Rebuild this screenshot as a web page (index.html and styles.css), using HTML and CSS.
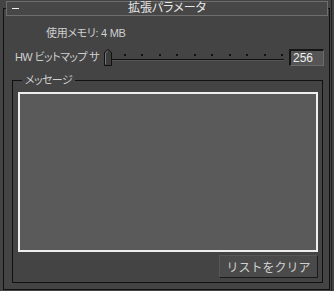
FILE: index.html
```html
<!DOCTYPE html>
<html lang="ja">
<head>
    <meta charset="UTF-8">
    <title>拡張パラメータ</title>
    <link rel="stylesheet" href="styles.css">
</head>
<body>
    <div class="page">
        <div class="rollout">
            <div class="rollout-title">
                <span class="collapse"></span>
                <span class="title-text">拡張パラメータ</span>
            </div>

            <div class="memory">使用メモリ: 4 MB</div>

            <div class="bitmap-row">
                <span class="bitmap-label">HW ビットマップ サ</span>
                <svg class="slider" width="182" height="17" viewBox="0 0 182 17">
                    <!-- tick dots -->
                    <g fill="#111">
                        <rect x="3" y="5" width="2" height="2"/>
                        <rect x="20" y="5" width="2" height="2"/>
                        <rect x="37" y="5" width="2" height="2"/>
                        <rect x="55" y="5" width="2" height="2"/>
                        <rect x="72" y="5" width="2" height="2"/>
                        <rect x="90" y="5" width="2" height="2"/>
                        <rect x="107" y="5" width="2" height="2"/>
                        <rect x="125" y="5" width="2" height="2"/>
                        <rect x="142" y="5" width="2" height="2"/>
                        <rect x="160" y="5" width="2" height="2"/>
                        <rect x="177" y="5" width="2" height="2"/>
                    </g>
                    <!-- track -->
                    <rect x="4" y="10" width="176" height="1" fill="#111"/>
                    <rect x="4" y="11" width="176" height="1" fill="#555"/>
                    <!-- thumb -->
                    <polygon points="0.5,3.5 4,0.5 7.5,3.5 7.5,16.5 0.5,16.5" fill="#3c3c3c" stroke="#111"/>
                    <polyline points="1.5,15.5 1.5,4 4,1.8" fill="none" stroke="#777"/>
                </svg>
                <span class="spinner">256</span>
            </div>

            <fieldset class="messages">
                <legend>メッセージ</legend>
                <div class="message-list"></div>
                <div class="actions">
                    <button class="button">リストをクリア</button>
                </div>
            </fieldset>
        </div>
    </div>
</body>
</html>
```

FILE: styles.css
```css
body {
    margin: 0;
    padding: 0;
    background-color: #444444;
    font-family: "Liberation Sans", "Noto Sans CJK JP", sans-serif;
    font-size: 11px;
    font-feature-settings: "palt";
    color: #cfcfcf;
}
.page {
    width: 332px;
    height: 291px;
    border-right: 1px solid #222;
    padding-top: 8px;
    box-sizing: border-box;
}
.rollout {
    margin-left: 3px;
    width: 327px;
    height: 282px;
    box-sizing: border-box;
    border: 1px solid #111;
}
.rollout-title {
    display: flex;
    align-items: center;
    margin: -8px 0 0 2px;
    width: 322px;
    height: 15px;
    box-sizing: border-box;
    border: 1px solid #6e6e6e;
    background-color: #474747;
    color: #e6e6e6;
}
.collapse {
    width: 7px;
    height: 1px;
    margin-left: 5px;
    background-color: #eeeeee;
}
.title-text {
    flex: 1;
    text-align: center;
    margin-right: 12px;
    line-height: 13px;
    font-size: 12px;
}
.memory {
    margin-top: 9px;
    padding-left: 42px;
    height: 16px;
    line-height: 16px;
    letter-spacing: -0.3px;
}
.bitmap-row {
    display: flex;
    align-items: center;
    margin-top: 8px;
    height: 17px;
    padding-left: 11px;
}
.bitmap-label {
    flex: none;
    width: 89px;
    white-space: nowrap;
    line-height: 16px;
    margin-top: -2px;
    letter-spacing: -0.6px;
}
.slider {
    display: block;
    flex: none;
}
.spinner {
    flex: none;
    margin-left: 3px;
    width: 35px;
    height: 17px;
    box-sizing: border-box;
    border-top: 2px solid #151515;
    border-left: 2px solid #151515;
    border-right: 1px solid #6a6a6a;
    border-bottom: 1px solid #6a6a6a;
    background-color: #555555;
    color: #eeeeee;
    font-size: 12px;
    line-height: 14px;
    padding-left: 2px;
}
.messages {
    margin: 7px 0 0 8px;
    width: 311px;
    box-sizing: border-box;
    border: 1px solid #111;
    padding: 5px 4px 4px 5px;
}
.messages legend {
    margin-left: 4px;
    padding: 0 3px;
    line-height: 14px;
    letter-spacing: -0.6px;
}
.message-list {
    height: 160px;
    box-sizing: border-box;
    border: 2px solid #eeeeee;
    background-color: #5a5a5a;
}
.actions {
    display: flex;
    justify-content: flex-end;
    margin-top: 3px;
}
.button {
    width: 99px;
    height: 23px;
    padding: 0;
    border-top: 1px solid #575757;
    border-left: 1px solid #575757;
    border-right: 1px solid #1a1a1a;
    border-bottom: 1px solid #1a1a1a;
    background-color: #4a4a4a;
    color: #cfcfcf;
    font-family: inherit;
    font-size: 12px;
}
```
